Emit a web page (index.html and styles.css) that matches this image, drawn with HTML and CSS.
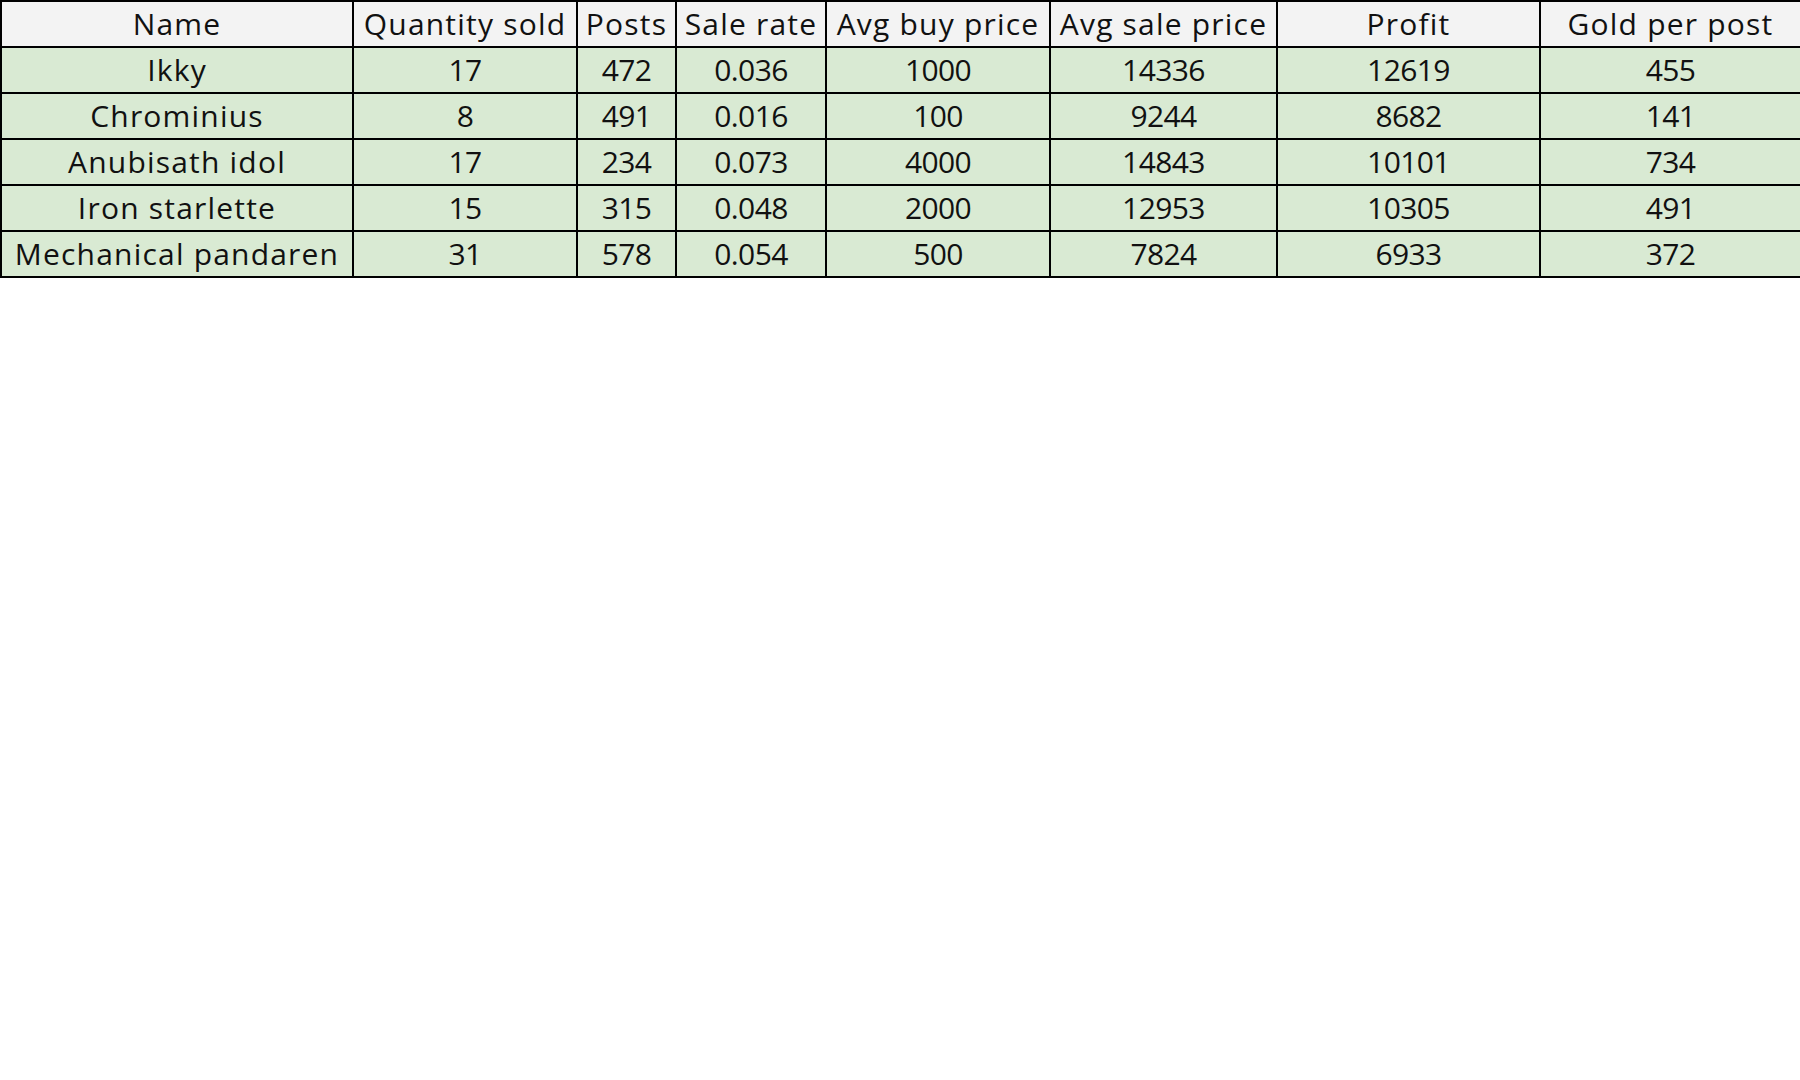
FILE: index.html
```html
<!DOCTYPE html>
<html>
<head>
<meta charset="utf-8">
<link rel="stylesheet" href="styles.css">
</head>
<body>
<table class="sheet">
  <colgroup>
    <col class="c-name">
    <col class="c-qty">
    <col class="c-posts">
    <col class="c-rate">
    <col class="c-buy">
    <col class="c-sale">
    <col class="c-profit">
    <col class="c-gold">
  </colgroup>
  <thead>
    <tr>
      <th>Name</th>
      <th>Quantity sold</th>
      <th>Posts</th>
      <th>Sale rate</th>
      <th>Avg buy price</th>
      <th>Avg sale price</th>
      <th>Profit</th>
      <th>Gold per post</th>
    </tr>
  </thead>
  <tbody>
    <tr><td>Ikky</td><td>17</td><td>472</td><td>0.036</td><td>1000</td><td>14336</td><td>12619</td><td>455</td></tr>
    <tr><td>Chrominius</td><td>8</td><td>491</td><td>0.016</td><td>100</td><td>9244</td><td>8682</td><td>141</td></tr>
    <tr><td>Anubisath idol</td><td>17</td><td>234</td><td>0.073</td><td>4000</td><td>14843</td><td>10101</td><td>734</td></tr>
    <tr><td>Iron starlette</td><td>15</td><td>315</td><td>0.048</td><td>2000</td><td>12953</td><td>10305</td><td>491</td></tr>
    <tr><td>Mechanical pandaren</td><td>31</td><td>578</td><td>0.054</td><td>500</td><td>7824</td><td>6933</td><td>372</td></tr>
  </tbody>
</table>
</body>
</html>
```
FILE: styles.css
```css
html, body {
  margin: 0;
  padding: 0;
  background: #ffffff;
}

.sheet {
  width: 1800px;
  table-layout: fixed;
  border-collapse: collapse;
  font-family: "Open Sans", "Lato", sans-serif;
  font-size: 30px;
  letter-spacing: 1.2px;
  color: #111111;
}

.c-name { width: 352px; }
.c-qty { width: 224px; }
.c-posts { width: 99px; }
.c-rate { width: 150px; }
.c-buy { width: 224px; }
.c-sale { width: 227px; }
.c-profit { width: 263px; }
.c-gold { width: 261px; }

.sheet th,
.sheet td {
  border: 2px solid #000000;
  height: 44px;
  padding: 0 2px;
  text-align: center;
  vertical-align: middle;
  white-space: nowrap;
  overflow: hidden;
  font-weight: 400;
  line-height: 44px;
}

.sheet th {
  background: #f3f3f3;
}

.sheet td {
  background: #d9ead3;
}

.sheet td + td {
  letter-spacing: -0.6px;
}
```
